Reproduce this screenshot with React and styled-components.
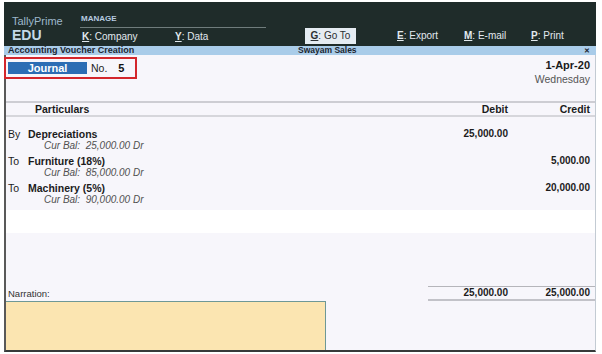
import styled, { createGlobalStyle } from 'styled-components';

const GlobalStyle = createGlobalStyle`
  html, body {
    margin: 0;
    padding: 0;
    background: #fff;
  }
  body {
    font-family: 'Liberation Sans', Arial, sans-serif;
  }
`;

const entries = [
  { side: 'By', name: 'Depreciations', bal: '25,000.00 Dr', debit: '25,000.00', credit: '' },
  { side: 'To', name: 'Furniture (18%)', bal: '85,000.00 Dr', debit: '', credit: '5,000.00' },
  { side: 'To', name: 'Machinery (5%)', bal: '90,000.00 Dr', debit: '', credit: '20,000.00' },
];

export default function App() {
  return (
    <>
      <GlobalStyle />
      <Frame>
        <TopBar>
          <Brand>
            <BrandName>TallyPrime</BrandName>
            <BrandEdition>EDU</BrandEdition>
          </Brand>
          <ManageGroup>
            <GroupLabel>MANAGE</GroupLabel>
            <GroupRule />
            <MenuRow>
              <MenuItem $width={93}>
                <Key>K</Key>: Company
              </MenuItem>
              <MenuItem>
                <Key>Y</Key>: Data
              </MenuItem>
            </MenuRow>
          </ManageGroup>
          <ActionRow>
            <GoToButton>
              <Key>G</Key>: Go To
            </GoToButton>
            <MenuItem $width={67}>
              <Key>E</Key>: Export
            </MenuItem>
            <MenuItem $width={67}>
              <Key>M</Key>: E-mail
            </MenuItem>
            <MenuItem>
              <Key>P</Key>: Print
            </MenuItem>
          </ActionRow>
        </TopBar>

        <TitleBar>
          <TitleLeft>Accounting Voucher Creation</TitleLeft>
          <TitleCenter>Swayam Sales</TitleCenter>
          <CloseMark>✕</CloseMark>
        </TitleBar>

        <Body>
          <VoucherTop>
            <Highlight>
              <VoucherType>Journal</VoucherType>
              <NoLabel>No.</NoLabel>
              <NoValue>5</NoValue>
            </Highlight>
            <DateBlock>
              <DateText>1-Apr-20</DateText>
              <DayText>Wednesday</DayText>
            </DateBlock>
          </VoucherTop>

          <ColumnHeader>
            <HeadCell>Particulars</HeadCell>
            <HeadCell $right>Debit</HeadCell>
            <HeadCell $right>Credit</HeadCell>
          </ColumnHeader>

          <EntryList>
            {entries.map((e) => (
              <Entry key={e.name}>
                <EntryLine>
                  <LedgerCell>
                    <Side>{e.side}</Side>
                    <LedgerName>{e.name}</LedgerName>
                  </LedgerCell>
                  <Amount>{e.debit}</Amount>
                  <Amount>{e.credit}</Amount>
                </EntryLine>
                <BalanceLine>
                  Cur Bal:&nbsp; {e.bal}
                </BalanceLine>
              </Entry>
            ))}
          </EntryList>

          <BlankRow />
          <Spacer />

          <FooterRow>
            <NarrationLabel>Narration:</NarrationLabel>
            <TotalsBox>
              <Amount>25,000.00</Amount>
              <Amount>25,000.00</Amount>
            </TotalsBox>
          </FooterRow>
          <NarrationBox />
        </Body>
      </Frame>
    </>
  );
}

const Frame = styled.div`
  width: 592px;
  height: 350px;
  margin: 2px 0 0 4px;
  display: flex;
  flex-direction: column;
`;

const TopBar = styled.header`
  height: 44px;
  background: #1f2c2a;
  display: flex;
  flex-shrink: 0;
`;

const Brand = styled.div`
  width: 68px;
  padding: 13px 0 0 8px;
  display: flex;
  flex-direction: column;
`;

const BrandName = styled.div`
  font-size: 11px;
  line-height: 12px;
  color: #9db8cc;
`;

const BrandEdition = styled.div`
  font-size: 14px;
  line-height: 16px;
  font-weight: 700;
  color: #c4d9e8;
`;

const ManageGroup = styled.div`
  width: 186px;
  padding-top: 13px;
  display: flex;
  flex-direction: column;
`;

const GroupLabel = styled.div`
  padding-left: 1px;
  font-size: 8px;
  line-height: 8px;
  font-weight: 700;
  color: #b7cbe0;
`;

const GroupRule = styled.div`
  height: 1px;
  margin-top: 4px;
  background: #6f7c7c;
`;

const MenuRow = styled.div`
  display: flex;
  margin-top: 3px;
  padding-left: 2px;
`;

const MenuItem = styled.div`
  width: ${(p) => (p.$width ? `${p.$width}px` : 'auto')};
  font-size: 10px;
  line-height: 12px;
  color: #e2e9ee;
  white-space: nowrap;
`;

const Key = styled.span`
  font-weight: 700;
  text-decoration: underline;
  text-underline-offset: 1px;
`;

const ActionRow = styled.div`
  display: flex;
  align-items: center;
  margin: 26px 0 0 39px;
  height: 16px;
`;

const GoToButton = styled.div`
  width: 51px;
  height: 16px;
  margin-right: 41px;
  background: #e5ecf2;
  color: #2b3033;
  font-size: 10px;
  line-height: 16px;
  text-align: center;
  white-space: nowrap;
`;

const TitleBar = styled.div`
  height: 9px;
  flex-shrink: 0;
  display: flex;
  align-items: center;
  background: #a9cce9;
  font-size: 8.5px;
  line-height: 9px;
  font-weight: 700;
  color: #1c2530;
`;

const TitleLeft = styled.div`
  width: 290px;
  padding-left: 4px;
  font-size: 9px;
`;

const TitleCenter = styled.div`
  flex: 1;
`;

const CloseMark = styled.div`
  padding-right: 6px;
  font-size: 7px;
`;

const Body = styled.main`
  flex: 1;
  display: flex;
  flex-direction: column;
  background: #f7f6fb;
  border-left: 2px solid #595959;
  border-right: 1px solid #c3cbd3;
  border-bottom: 2px solid #373a3a;
`;

const VoucherTop = styled.div`
  height: 46px;
  display: flex;
  justify-content: space-between;
  align-items: flex-start;
`;

const Highlight = styled.div`
  margin: 2px 0 0 -2px;
  width: 127px;
  height: 18px;
  border: 2px solid #d3262c;
  display: flex;
  align-items: center;
  padding-left: 2px;
  box-sizing: content-box;
`;

const VoucherType = styled.div`
  width: 79px;
  height: 12px;
  background: #2c6db4;
  color: #fff;
  font-size: 11px;
  line-height: 12px;
  font-weight: 700;
  text-align: center;
`;

const NoLabel = styled.span`
  margin-left: 4px;
  font-size: 10.5px;
  color: #222;
`;

const NoValue = styled.span`
  margin-left: 11px;
  font-size: 11px;
  font-weight: 700;
  color: #111;
`;

const DateBlock = styled.div`
  padding: 3px 5px 0 0;
  text-align: right;
`;

const DateText = styled.div`
  font-size: 11px;
  line-height: 14px;
  font-weight: 700;
  color: #1a1a1a;
`;

const DayText = styled.div`
  font-size: 10.5px;
  line-height: 14px;
  color: #555;
`;

const ColumnHeader = styled.div`
  display: grid;
  grid-template-columns: 1fr 100px 82px;
  padding-right: 5px;
  border-top: 2px solid #cdcdd3;
  border-bottom: 2px solid #d6d6db;
  height: 12px;
`;

const HeadCell = styled.div`
  padding-left: ${(p) => (p.$right ? '0' : '29px')};
  text-align: ${(p) => (p.$right ? 'right' : 'left')};
  font-size: 10.5px;
  line-height: 12px;
  font-weight: 700;
  color: #1c1c1c;
`;

const EntryList = styled.div`
  padding-top: 11px;
  display: flex;
  flex-direction: column;
  gap: 3px;
`;

const Entry = styled.div`
  display: flex;
  flex-direction: column;
`;

const EntryLine = styled.div`
  display: grid;
  grid-template-columns: 1fr 100px 82px;
  padding-right: 5px;
  height: 12px;
  align-items: center;
`;

const LedgerCell = styled.div`
  display: flex;
  padding-left: 2px;
  font-size: 10.5px;
  line-height: 12px;
  color: #1c1c1c;
`;

const Side = styled.span`
  width: 20px;
`;

const LedgerName = styled.span`
  font-weight: 700;
`;

const Amount = styled.div`
  text-align: right;
  font-size: 10px;
  line-height: 12px;
  font-weight: 700;
  color: #1c1c1c;
`;

const BalanceLine = styled.div`
  padding-left: 38px;
  font-size: 10px;
  line-height: 12px;
  font-style: italic;
  color: #505050;
`;

const BlankRow = styled.div`
  margin-top: 4px;
  height: 23px;
  background: #ffffff;
`;

const Spacer = styled.div`
  flex: 1;
`;

const FooterRow = styled.div`
  display: flex;
  justify-content: space-between;
  align-items: center;
  height: 15px;
`;

const NarrationLabel = styled.div`
  padding-left: 2px;
  font-size: 9.5px;
  line-height: 12px;
  color: #333;
`;

const TotalsBox = styled.div`
  width: 162px;
  height: 12px;
  padding-right: 5px;
  display: grid;
  grid-template-columns: 80px 82px;
  border-top: 1px solid #b5b5ba;
  border-bottom: 2px solid #c2c2c8;
`;

const NarrationBox = styled.div`
  width: 319px;
  height: 48px;
  background: #fbe5b1;
  border-top: 1px solid #6e9896;
  border-right: 1px solid #6e9896;
`;
